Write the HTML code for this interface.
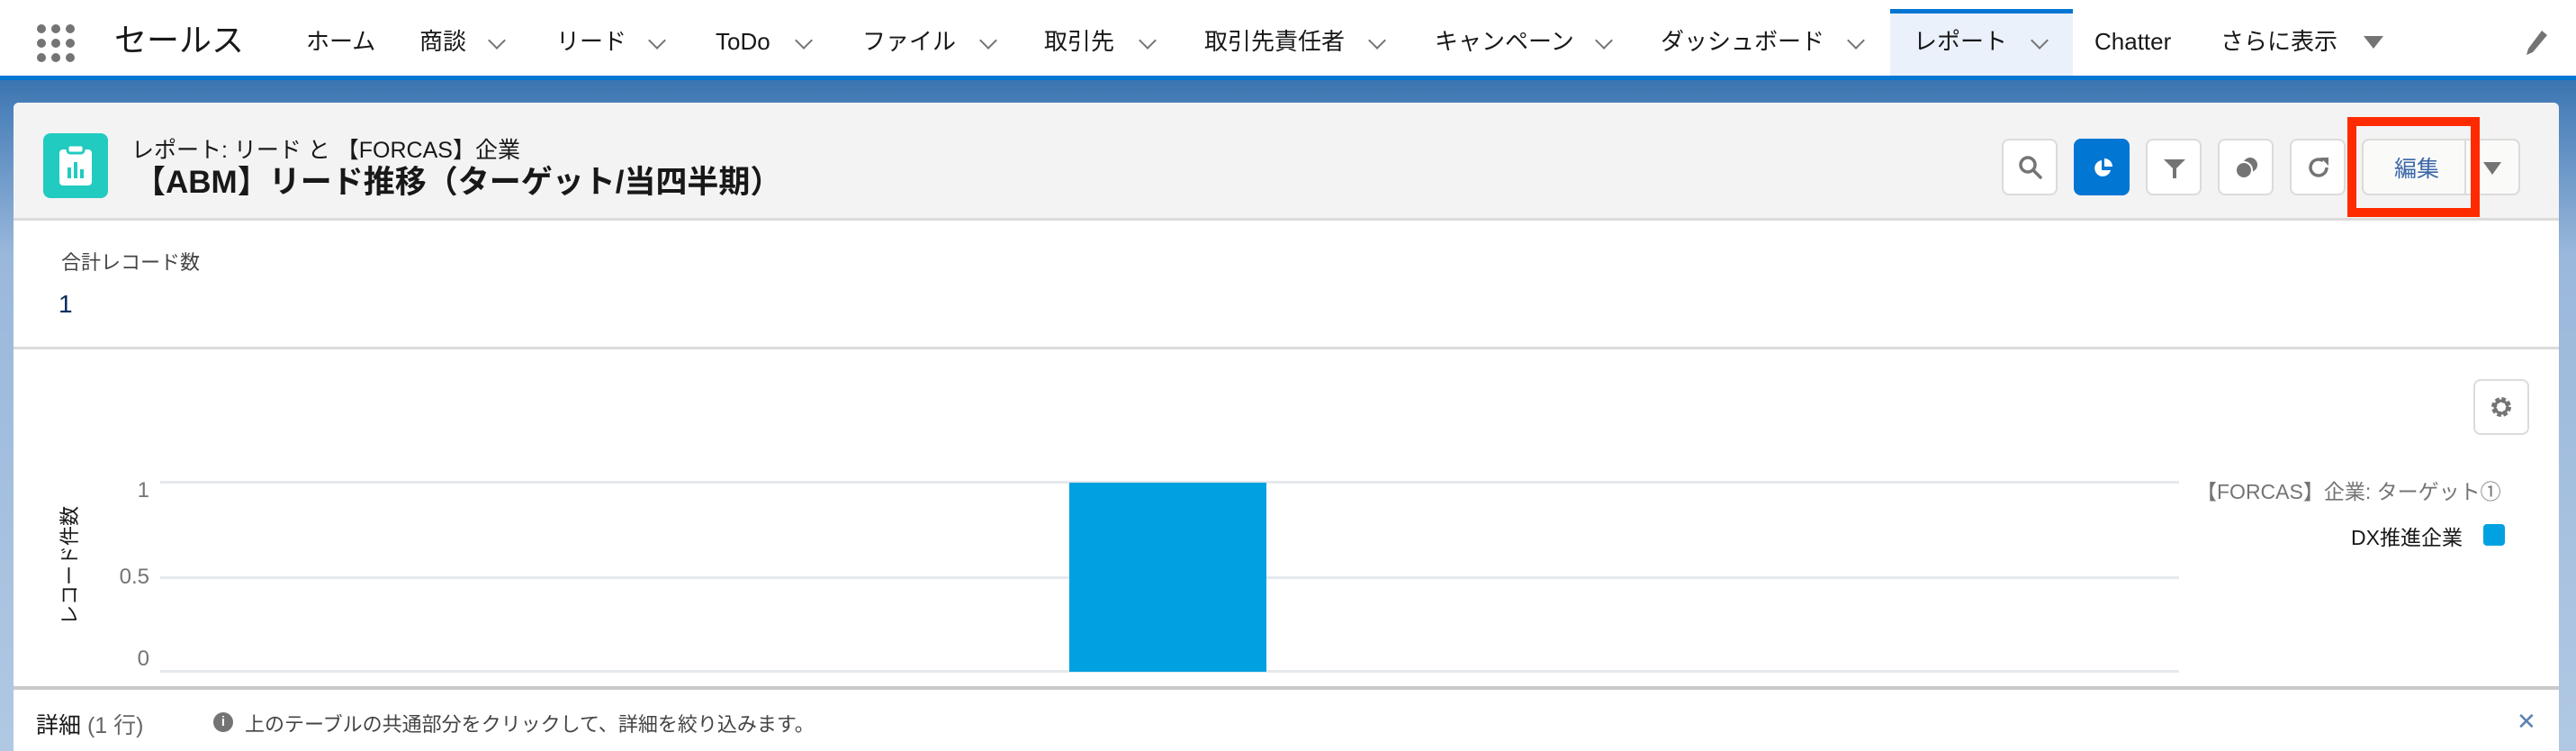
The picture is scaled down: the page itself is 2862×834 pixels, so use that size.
<!DOCTYPE html>
<html><head><meta charset="utf-8"><style>
*{margin:0;padding:0;box-sizing:border-box}
body{width:2862px;height:834px;overflow:hidden;position:relative;font-family:"Liberation Sans","Noto Sans CJK JP",sans-serif;color:#181818;background:#fff}
.a{position:absolute;white-space:nowrap}
.nav{position:absolute;left:0;top:0;width:2862px;height:84px;background:#fff}
.nt{position:absolute;top:28px;font-size:26px;line-height:32px;color:#181818}
.ch{position:absolute;top:36px;width:14px;height:14px;border-right:2.5px solid #747474;border-bottom:2.5px solid #747474;transform:rotate(45deg)}
.bg{position:absolute;left:0;top:84px;width:2862px;height:750px;background:linear-gradient(180deg,#0176d3 0,#0176d3 5px,#3b74b0 5px,#4d82bb 40px,#9ab8db 200px,#b0c8e3 750px)}
.card{position:absolute;left:15px;top:114px;width:2828px;height:720px;background:#fff;border-radius:6px 6px 0 0;overflow:hidden}
.btn{position:absolute;top:154px;width:62px;height:63px;background:#fff;border:2px solid #dddbda;border-radius:8px}
.grid{position:absolute;left:178px;width:2243px;height:3px;background:#e5e9ee}
.yl{position:absolute;font-size:24px;color:#747474;text-align:right;width:80px;left:86px}
</style></head><body>
<div class="nav">
  <svg class="a" style="left:40px;top:26px" width="44" height="44" viewBox="0 0 44 44" fill="#747474">
    <circle cx="6" cy="6" r="5"/><circle cx="22" cy="6" r="5"/><circle cx="38" cy="6" r="5"/>
    <circle cx="6" cy="22" r="5"/><circle cx="22" cy="22" r="5"/><circle cx="38" cy="22" r="5"/>
    <circle cx="6" cy="38" r="5"/><circle cx="22" cy="38" r="5"/><circle cx="38" cy="38" r="5"/>
  </svg>
  <div class="a" style="left:127px;top:23px;font-size:36px;line-height:44px">セールス</div>
  <div class="nt" style="left:340px;top:30px">ホーム</div>
  <div class="nt" style="left:466px;top:30px">商談</div><div class="ch" style="left:545px;top:38px"></div>
  <div class="nt" style="left:618px;top:30px">リード</div><div class="ch" style="left:723px;top:38px"></div>
  <div class="nt" style="left:795px;top:30px">ToDo</div><div class="ch" style="left:886px;top:38px"></div>
  <div class="nt" style="left:958px;top:30px">ファイル</div><div class="ch" style="left:1091px;top:38px"></div>
  <div class="nt" style="left:1160px;top:30px">取引先</div><div class="ch" style="left:1268px;top:38px"></div>
  <div class="nt" style="left:1338px;top:30px">取引先責任者</div><div class="ch" style="left:1523px;top:38px"></div>
  <div class="nt" style="left:1594px;top:30px">キャンペーン</div><div class="ch" style="left:1775px;top:38px"></div>
  <div class="nt" style="left:1845px;top:30px">ダッシュボード</div><div class="ch" style="left:2055px;top:38px"></div>
  <div class="a" style="left:2100px;top:10px;width:203px;height:74px;background:#eaf1fb;border-top:5px solid #0176d3"></div>
  <div class="nt" style="left:2126px;top:30px">レポート</div><div class="ch" style="left:2259px;top:38px"></div>
  <div class="nt" style="left:2327px;top:30px">Chatter</div>
  <div class="nt" style="left:2467px;top:30px">さらに表示</div>
  <div class="a" style="left:2626px;top:40px;width:0;height:0;border-left:11px solid transparent;border-right:11px solid transparent;border-top:14px solid #747474"></div>
  <svg class="a" style="left:2804px;top:32px" width="28" height="32" viewBox="0 0 28 32"><path d="M20 2l6 5L10 26l-7 3 2-7z" fill="#747474"/></svg>
</div>
<div class="bg"></div>
<div class="card">
  <div class="a" style="left:0;top:0;width:2828px;height:131px;background:#f3f3f3;border-bottom:3px solid #dddbda"></div>
  <div class="a" style="left:33px;top:34px;width:72px;height:72px;background:#22cbc0;border-radius:8px"></div>
  <svg class="a" style="left:47px;top:46px" width="44" height="48" viewBox="0 0 44 48"><rect x="4" y="6" width="36" height="40" rx="4" fill="#fff"/><rect x="13" y="1" width="18" height="9" rx="3" fill="#fff" stroke="#22cbc0" stroke-width="3"/><rect x="13" y="26" width="4" height="12" fill="#22cbc0"/><rect x="20" y="20" width="4" height="18" fill="#22cbc0"/><rect x="27" y="28" width="4" height="10" fill="#22cbc0"/></svg>
  <div class="a" style="left:131px;top:38px;font-size:25px;line-height:30px">レポート: リード と 【FORCAS】企業</div>
  <div class="a" style="left:134px;top:68px;font-size:35px;line-height:42px;font-weight:bold">【ABM】リード推移（ターゲット/当四半期）</div>
  <div class="a" style="left:53px;top:160px;font-size:22px;color:#444">合計レコード数</div>
  <div class="a" style="left:50px;top:208px;font-size:28px;color:#032d60">1</div>
  <div class="a" style="left:0;top:271px;width:2828px;height:3px;background:#dddbda"></div>
  <div class="a" style="left:0;top:648px;width:2828px;height:4px;background:#c9c9c9"></div>
</div>
<div class="btn" style="left:2224px"><svg style="position:absolute;left:15px;top:15px" width="30" height="30" viewBox="0 0 30 30"><circle cx="12" cy="12" r="8" fill="none" stroke="#747474" stroke-width="3.5"/><path d="M18 18l8 8" stroke="#747474" stroke-width="3.5" stroke-linecap="round"/></svg></div>
<div class="btn" style="left:2304px;background:#0176d3;border-color:#0176d3"><svg style="position:absolute;left:16px;top:16px" width="30" height="30" viewBox="0 0 30 30"><path d="M13 6A9 9 0 1 0 23 17H13z" fill="#fff"/><path d="M16 4a9 9 0 0 1 9 9h-9z" fill="#fff"/></svg></div>
<div class="btn" style="left:2384px"><svg style="position:absolute;left:15px;top:15px" width="30" height="30" viewBox="0 0 30 30"><path d="M3 6h24l-10 10v11h-4V16z" fill="#747474"/></svg></div>
<div class="btn" style="left:2464px"><svg style="position:absolute;left:15px;top:16px" width="30" height="30" viewBox="0 0 30 30"><circle cx="19" cy="11" r="8" fill="#747474"/><circle cx="12" cy="17" r="9" fill="#747474" stroke="#fff" stroke-width="2"/></svg></div>
<div class="btn" style="left:2544px"><svg style="position:absolute;left:15px;top:15px" width="30" height="30" viewBox="0 0 30 30"><path d="M24 15a9 9 0 1 1-4-7.5" fill="none" stroke="#747474" stroke-width="3.5"/><path d="M17 4h9v9z" fill="#747474"/></svg></div>
<div class="a" style="left:2624px;top:154px;width:176px;height:63px;background:#fafaf9;border:2px solid #dddbda;border-radius:8px"></div>
<div class="a" style="left:2738px;top:156px;width:2px;height:59px;background:#dddbda"></div>
<div class="a" style="left:2660px;top:168px;font-size:25px;color:#3b67a8">編集</div>
<div class="a" style="left:2759px;top:180px;width:0;height:0;border-left:10px solid transparent;border-right:10px solid transparent;border-top:14px solid #747474"></div>
<div class="a" style="left:2608px;top:130px;width:147px;height:111px;border:10px solid #ff2a00"></div>
<div class="a" style="left:2748px;top:421px;width:62px;height:62px;background:#fff;border:2px solid #dddbda;border-radius:8px"></div>
<svg class="a" style="left:2765px;top:438px" width="28" height="28" viewBox="0 0 28 28"><circle cx="14" cy="14" r="8" fill="none" stroke="#747474" stroke-width="6" stroke-dasharray="4 2.3"/><circle cx="14" cy="14" r="7" fill="none" stroke="#747474" stroke-width="3"/></svg>
<div class="grid" style="top:534px"></div>
<div class="grid" style="top:640px"></div>
<div class="grid" style="top:744px"></div>
<div class="yl" style="top:531px">1</div>
<div class="yl" style="top:627px">0.5</div>
<div class="yl" style="top:718px">0</div>
<div class="a" style="top:628px;font-size:22px;transform:translate(-50%,-50%) rotate(-90deg);transform-origin:center;left:76px">レコード件数</div>
<div class="a" style="left:1188px;top:536px;width:219px;height:210px;background:#00a1e0"></div>
<div class="a" style="left:2440px;top:527px;font-size:23px;color:#747474">【FORCAS】企業: ターゲット①</div>
<div class="a" style="left:2612px;top:578px;font-size:23px">DX推進企業</div>
<div class="a" style="left:2759px;top:582px;width:24px;height:24px;background:#00a1e0;border-radius:4px"></div>
<div class="a" style="left:40px;top:786px;font-size:25px">詳細 <span style="color:#666">(1 行)</span></div>
<div class="a" style="left:237px;top:791px;width:22px;height:22px;border-radius:50%;background:#747474;color:#fff;font-size:15px;font-weight:bold;text-align:center;line-height:22px">i</div>
<div class="a" style="left:272px;top:787px;font-size:22px;color:#444">上のテーブルの共通部分をクリックして、詳細を絞り込みます。</div>
<div class="a" style="left:2796px;top:786px;font-size:26px;color:#5a82b5">✕</div>
</body></html>
